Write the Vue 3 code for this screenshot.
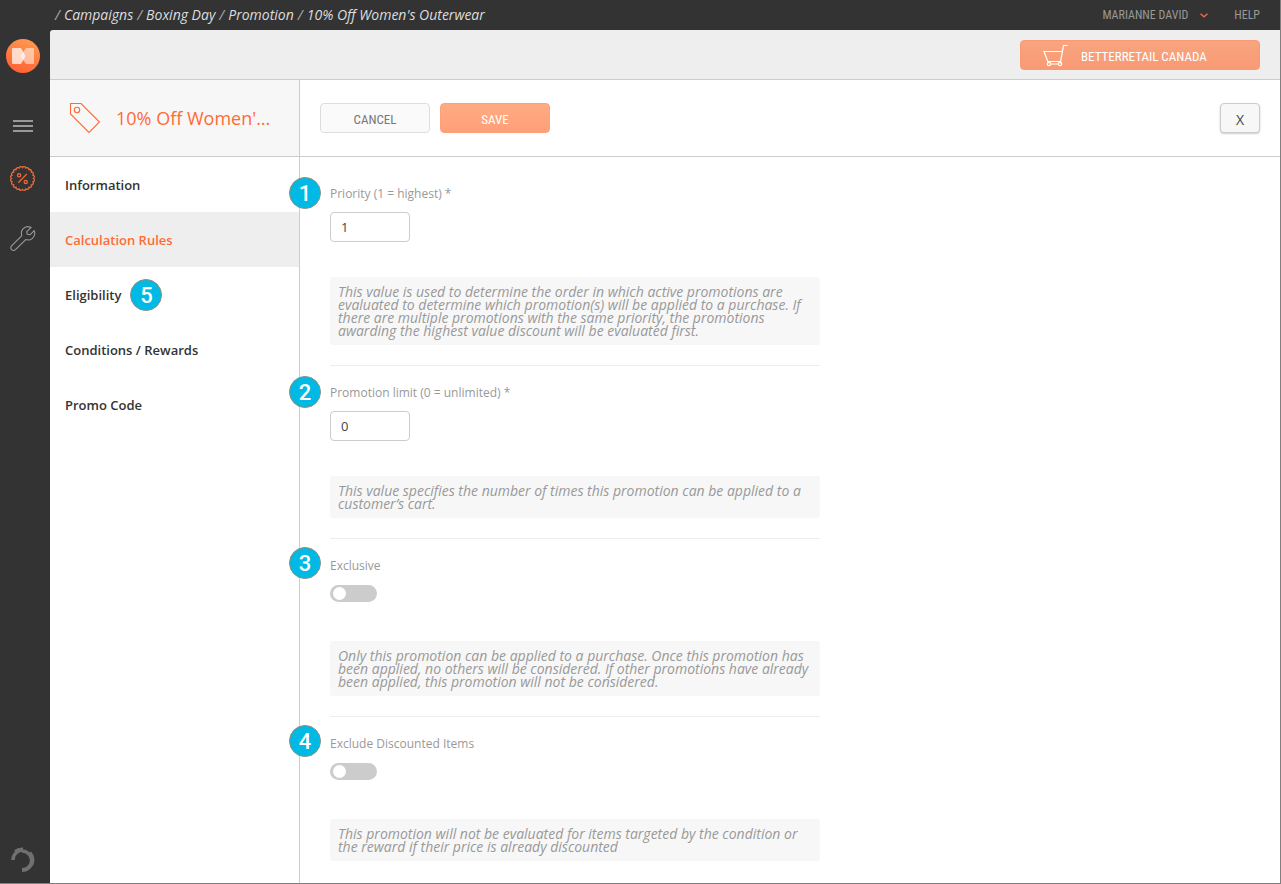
<script setup>
import { reactive } from 'vue'

const crumbs = ['Campaigns', 'Boxing Day', 'Promotion', "10% Off Women's Outerwear"]

const tabs = [
  { label: 'Information' },
  { label: 'Calculation Rules', active: true },
  { label: 'Eligibility', step: 5 },
  { label: 'Conditions / Rewards' },
  { label: 'Promo Code' },
]

const fields = reactive([
  {
    id: 'priority',
    step: 1,
    kind: 'text',
    label: 'Priority (1 = highest) *',
    value: '1',
    hint: 'This value is used to determine the order in which active promotions are evaluated to determine which promotion(s) will be applied to a purchase. If there are multiple promotions with the same priority, the promotions awarding the highest value discount will be evaluated first.',
  },
  {
    id: 'limit',
    step: 2,
    kind: 'text',
    label: 'Promotion limit (0 = unlimited) *',
    value: '0',
    hint: 'This value specifies the number of times this promotion can be applied to a customer’s cart.',
  },
  {
    id: 'exclusive',
    step: 3,
    kind: 'toggle',
    label: 'Exclusive',
    value: false,
    hint: 'Only this promotion can be applied to a purchase. Once this promotion has been applied, no others will be considered. If other promotions have already been applied, this promotion will not be considered.',
  },
  {
    id: 'exclude-discounted',
    step: 4,
    kind: 'toggle',
    label: 'Exclude Discounted Items',
    value: false,
    hint: 'This promotion will not be evaluated for items targeted by the condition or the reward if their price is already discounted',
  },
])

// Scalloped outline of the promotions icon: small arcs between points on a circle.
const count = 20
const points = Array.from({ length: count }, (_, i) => {
  const a = (i / count) * Math.PI * 2
  return `${(12.5 + 11 * Math.cos(a)).toFixed(2)} ${(12.5 + 11 * Math.sin(a)).toFixed(2)}`
})
const scallop = `M${points[0]}` + points.slice(1).concat(points[0]).map((p) => `A1.9 1.9 0 0 1 ${p}`).join('') + 'Z'
</script>

<template>
  <div class="app">
    <aside class="rail">
      <a class="logo" href="#" aria-label="Home">
        <svg width="34" height="34" viewBox="0 0 34 34">
          <defs>
            <linearGradient id="logo-fill" x1="0.7" y1="0" x2="0.3" y2="1">
              <stop offset="0" stop-color="#ff9a50" />
              <stop offset="1" stop-color="#ff6033" />
            </linearGradient>
          </defs>
          <circle cx="17" cy="17" r="17" fill="url(#logo-fill)" />
          <path d="M7 9h8l4 7v2l-4 7H7a1 1 0 0 1-1-1V10a1 1 0 0 1 1-1z" fill="#fff" fill-opacity=".72" />
          <path d="M28 9h-8l-5 7v2l5 7h8z" fill="#fff" fill-opacity=".5" />
        </svg>
      </a>
      <button class="rail-btn menu" type="button" aria-label="Menu">
        <svg width="20" height="12" viewBox="0 0 20 12"><path d="M0 1h20M0 6h20M0 11h20" stroke="#999" stroke-width="2" /></svg>
      </button>
      <button class="rail-btn promo" type="button" aria-label="Promotions">
        <svg width="26" height="26" viewBox="0 0 26 26" fill="none" stroke="#f16a38" stroke-width="1.3">
          <path :d="scallop" />
          <path d="M16.9 7.9 8.3 16.7" />
          <circle cx="9.1" cy="9.3" r="1.6" />
          <circle cx="15.7" cy="15.9" r="1.6" />
        </svg>
      </button>
      <button class="rail-btn" type="button" aria-label="Settings">
        <svg width="26" height="26" viewBox="0 0 26 26" fill="none" stroke="#999" stroke-width="1.1" stroke-linejoin="round">
          <path d="M21.2 1.4c-3-1.3-6.4-.6-8.2 1.5-1.7 1.9-2 4.3-1.2 6.7L1.6 19.8a2.7 2.7 0 0 0 0 3.9 2.7 2.7 0 0 0 3.9 0L15.7 13.6c2.5.8 4.9.4 6.8-1.3 2.1-1.9 2.7-4.9 1.7-7.7l-4.3 4.2-2.6-.5-.6-2.7z" />
        </svg>
      </button>
      <svg class="spinner" width="26" height="26" viewBox="0 0 26 26" fill="none" stroke="#707070">
        <path d="M3 13A10 10 0 0 1 12.5 3" stroke-width="3.5" />
        <path d="M5 4.5A11.5 11.5 0 0 1 13 2" stroke-width="3" />
        <path d="M12 4a9.5 9.5 0 0 1 9.5 9" stroke-width="3.5" />
        <path d="M20 5.5A11 11 0 0 1 21.5 18" stroke-width="3" />
        <path d="M22 13A10 10 0 0 1 12 23" stroke-width="4" />
      </svg>
    </aside>

    <div class="body">
      <header class="topbar">
        <nav class="crumbs" aria-label="Breadcrumb">
          <span v-for="crumb in crumbs" :key="crumb" class="crumb"><span class="slash">/</span><a href="#">{{ crumb }}</a></span>
        </nav>
        <button class="user" type="button">
          MARIANNE DAVID
          <svg width="8" height="5" viewBox="0 0 8 5"><path d="M.5.8 4 3.8 7.5.8" fill="none" stroke="#f16a38" stroke-width="1.4" /></svg>
        </button>
        <a class="help" href="#">HELP</a>
      </header>

      <div class="scope-bar">
        <button class="scope" type="button">
          <svg width="26" height="24" viewBox="0 0 26 24" fill="none" stroke="#fff" stroke-width="1.2">
            <path d="M24.5 1.5H20.5L17.6 17.5H4.8L1 7.5H19.4" />
            <circle cx="6" cy="20" r="1.7" /><circle cx="17" cy="20" r="1.7" />
            <path d="M4.8 17.5v2M17.6 17.5v2M7.5 20h8" />
          </svg>
          <span>BETTERRETAIL CANADA</span>
        </button>
      </div>

      <div class="workspace">
        <aside class="side">
          <div class="side-head">
            <svg width="32" height="32" viewBox="0 0 32 32" fill="none" stroke="#ff6b35" stroke-width="1.1">
              <path d="M1.5 1.5H12L30.5 20 20 30.5 1.5 12z" />
              <circle cx="8" cy="8" r="2.7" />
            </svg>
            <h1>10% Off Women'...</h1>
          </div>
          <nav class="tabs">
            <a v-for="tab in tabs" :key="tab.label" href="#" :class="['tab', { active: tab.active }]">
              {{ tab.label }}<span v-if="tab.step" class="step">{{ tab.step }}</span>
            </a>
          </nav>
        </aside>

        <main class="main">
          <div class="actions">
            <button class="btn" type="button">CANCEL</button>
            <button class="btn primary" type="button">SAVE</button>
            <button class="btn close" type="button" aria-label="Close">X</button>
          </div>
          <form class="form" @submit.prevent>
            <section v-for="field in fields" :key="field.id" :class="['field', field.kind]">
              <span class="step">{{ field.step }}</span>
              <label :for="field.id">{{ field.label }}</label>
              <input v-if="field.kind === 'text'" :id="field.id" v-model="field.value" class="text-box" type="text" />
              <input v-else :id="field.id" v-model="field.value" class="switch" type="checkbox" role="switch" />
              <p class="hint">{{ field.hint }}</p>
            </section>
          </form>
        </main>
      </div>
    </div>
  </div>
</template>

<style>
body {
  margin: 0;
  background: #fff;
}
</style>

<style scoped>
* {
  box-sizing: border-box;
}
.app {
  display: flex;
  min-height: 100vh;
  border-right: 1px solid #808080;
  border-bottom: 1px solid #808080;
  background: #333;
  font-family: "Open Sans", "Noto Sans", sans-serif;
  font-size: 13px;
  color: #333;
}
a {
  color: inherit;
  text-decoration: none;
}
button {
  font-family: "Roboto Condensed", Roboto, sans-serif;
  cursor: pointer;
}
.rail {
  flex: 0 0 50px;
  display: flex;
  flex-direction: column;
  align-items: flex-start;
  padding: 39px 0 10px 6px;
}
.rail svg {
  display: block;
}
.rail-btn {
  padding: 0;
  border: 0;
  background: none;
  margin: 0 0 34px 4px;
}
.menu {
  margin: 47px 0 34px 7px;
}
.spinner {
  margin: auto 0 0 4px;
}
.body {
  flex: 1;
  min-width: 0;
  display: flex;
  flex-direction: column;
}
.topbar {
  display: flex;
  align-items: center;
  height: 30px;
  padding: 0 20px 0 5px;
  font-family: "Roboto Condensed", Roboto, sans-serif;
  font-size: 12px;
  color: #999;
}
.crumbs {
  flex: 1;
  display: flex;
  gap: 4px;
  font-family: "Open Sans", "Noto Sans", sans-serif;
  font-size: 14px;
  line-height: 28px;
  font-style: italic;
  color: #ddd;
}
.slash {
  margin-right: 4px;
  color: #aaa;
}
.user {
  display: flex;
  align-items: center;
  gap: 12px;
  margin-right: 26px;
  padding: 0;
  border: 0;
  background: none;
  color: inherit;
  font-size: 12px;
}
.scope-bar {
  display: flex;
  justify-content: flex-end;
  height: 50px;
  padding: 10px 20px;
  border-bottom: 1px solid #ccc;
  border-top-left-radius: 3px;
  background: #eee;
}
.scope {
  display: flex;
  align-items: center;
  gap: 12px;
  width: 240px;
  height: 30px;
  padding: 2px 22px 0;
  border: 1px solid #f79a75;
  border-radius: 4px;
  background: linear-gradient(#f8a57d, #f89a75);
  color: #fff;
  font-size: 13px;
}
.workspace {
  flex: 1;
  display: flex;
  background: #fff;
}
.side {
  flex: 0 0 250px;
  border-right: 1px solid #ccc;
}
.side-head {
  display: flex;
  align-items: center;
  gap: 15px;
  height: 77px;
  padding: 0 19px;
  border-bottom: 1px solid #ccc;
  background: #f7f7f7;
}
h1 {
  margin: 0;
  font-size: 18px;
  font-weight: 400;
  color: #ff6b35;
  white-space: nowrap;
}
.tab {
  display: flex;
  align-items: center;
  height: 55px;
  padding: 0 15px;
  font-weight: 600;
}
.tab.active {
  background: #eee;
  color: #ff6b35;
}
.step {
  display: flex;
  align-items: center;
  justify-content: center;
  width: 32px;
  height: 32px;
  padding-top: 2px;
  border: 1px solid #8c9080;
  border-radius: 50%;
  background: #00b9e4;
  color: #fff;
  font-family: Roboto, sans-serif;
  font-size: 22px;
  line-height: 22px;
  font-weight: 500;
}
.tab .step {
  margin-left: 9px;
}
.main {
  flex: 1;
  min-width: 0;
}
.actions {
  display: flex;
  align-items: center;
  gap: 10px;
  height: 77px;
  padding: 0 20px;
  border-bottom: 1px solid #ccc;
}
.btn {
  width: 110px;
  height: 30px;
  padding: 2px 0 0;
  border: 1px solid #ddd;
  border-radius: 4px;
  background: #fafafa;
  color: #777;
  font-size: 13px;
}
.btn.primary {
  border-color: #ffa07a;
  background: linear-gradient(#ffab82, #ff9f7a);
  color: #fff;
}
.btn.close {
  width: 40px;
  margin-left: auto;
  border-color: #ccc;
  background: #f7f7f7;
  box-shadow: 0 1px 2px rgba(0, 0, 0, 0.2);
  color: #444;
  font-family: "Open Sans", sans-serif;
  font-size: 14px;
}
.form {
  max-width: 550px;
  padding: 10px 30px 0;
}
.field {
  position: relative;
  display: flex;
  flex-direction: column;
  align-items: flex-start;
  padding: 19px 0 20px;
  border-bottom: 1px solid #eee;
}
.field:last-child {
  border-bottom: 0;
}
.field .step {
  position: absolute;
  left: -41px;
  top: 10px;
}
.field.toggle .step {
  top: 8px;
}
label {
  font-size: 12px;
  line-height: 16px;
  color: #999;
}
.text-box {
  width: 80px;
  height: 30px;
  margin: 10px 0 35px;
  padding: 0 10px;
  border: 1px solid #ccc;
  border-radius: 4px;
  background: #fff;
  color: #444;
  font: inherit;
}
.switch {
  appearance: none;
  width: 47px;
  height: 17px;
  margin: 11px 0 39px;
  padding: 2px 3px;
  border-radius: 9px;
  background: #ccc;
}
.switch::before {
  content: "";
  display: block;
  width: 13px;
  height: 13px;
  border-radius: 50%;
  background: #fff;
}
.switch:checked {
  padding-left: 31px;
  background: #ff6b35;
}
.hint {
  align-self: stretch;
  margin: 0;
  padding: 8px;
  border-radius: 3px;
  background: #f7f7f7;
  font-size: 14px;
  line-height: 13px;
  font-style: italic;
  color: #999;
}
</style>
